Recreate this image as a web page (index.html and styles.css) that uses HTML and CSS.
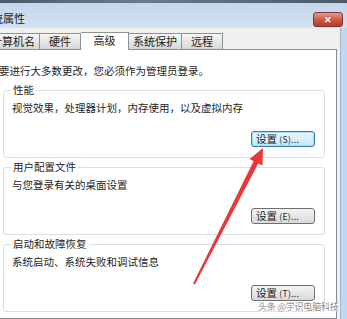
FILE: index.html
```html
<!DOCTYPE html>
<html lang="zh-CN">
<head>
<meta charset="utf-8">
<title>系统属性</title>
<link rel="stylesheet" href="styles.css">
</head>
<body>
<div class="window">
  <div class="topstrip"></div>
  <div class="titlebar">
    <span class="title">统属性</span>
    <span class="close">✕</span>
  </div>
  <div class="client">
    <div class="client-main">
      <div class="tabs">
        <div class="tab first">计算机名</div>
        <div class="tab">硬件</div>
        <div class="tab active">高级</div>
        <div class="tab">系统保护</div>
        <div class="tab">远程</div>
      </div>
      <div class="panel">
        <div class="note">要进行大多数更改，您必须作为管理员登录。</div>
        <fieldset class="group">
          <legend>性能</legend>
          <div class="desc">视觉效果，处理器计划，内存使用，以及虚拟内存</div>
          <div class="actions"><button class="btn focused">设置 <span class="key">(S)...</span></button></div>
        </fieldset>
        <fieldset class="group">
          <legend>用户配置文件</legend>
          <div class="desc">与您登录有关的桌面设置</div>
          <div class="actions"><button class="btn">设置 <span class="key">(E)...</span></button></div>
        </fieldset>
        <fieldset class="group">
          <legend>启动和故障恢复</legend>
          <div class="desc">系统启动、系统失败和调试信息</div>
          <div class="actions"><button class="btn">设置 <span class="key">(T)...</span></button></div>
        </fieldset>
      </div>
    </div>
    <div class="frame-right"></div>
  </div>
</div>
<svg class="arrow" width="347" height="319" viewBox="0 0 347 319">
  <polygon points="263,148 262.5,165.5 258.2,163.4 194.9,284.5 193.1,283.5 253.6,161.2 249.6,159.1" fill="#e8383a"/>
</svg>
<div class="watermark">头条 @学识电脑科技</div>
</body>
</html>
```

FILE: styles.css
```css
html, body {
  margin: 0;
  padding: 0;
}
body {
  width: 347px;
  height: 319px;
  overflow: hidden;
  position: relative;
  background: #f0f0f0;
  font-family: "Noto Sans CJK SC", "Noto Sans", sans-serif;
  font-size: 10.5px;
  color: #1e1e1e;
}
.window {
  display: flex;
  flex-direction: column;
  height: 319px;
}
.topstrip {
  height: 3px;
  background: linear-gradient(90deg, #4b5866, #6b7a8a 40%, #4b5866);
}
.titlebar {
  height: 25px;
  background: linear-gradient(#c2d6ec, #d4e2f1);
  display: flex;
  align-items: center;
  justify-content: space-between;
  padding: 0 4px 0 0;
  box-sizing: border-box;
}
.title {
  margin-left: -8px;
  font-size: 11px;
  color: #1a1a1a;
  padding-top: 4px;
}
.close {
  width: 30px;
  height: 15px;
  margin-top: 7px;
  box-sizing: border-box;
  border: 1px solid #7c3a33;
  border-radius: 3px;
  background: linear-gradient(#e49a8c, #cf5b48 50%, #b73a28);
  color: #fff;
  font-size: 9px;
  font-weight: bold;
  line-height: 13px;
  text-align: center;
}
.client {
  flex: 1;
  display: flex;
}
.client-main {
  flex: 1;
  background: #f0f0f0;
  display: flex;
  flex-direction: column;
  padding-top: 3px;
  padding-right: 3px;
}
.frame-right {
  width: 6px;
  background: #c3d6eb;
  border-left: 1px solid #9fb6cf;
}
.tabs {
  display: flex;
  align-items: flex-end;
  height: 18px;
  position: relative;
  z-index: 1;
}
.tab {
  min-width: 41px;
  height: 16px;
  box-sizing: border-box;
  padding: 0 4px;
  border: 1px solid #8e9196;
  border-bottom: none;
  border-left: none;
  background: linear-gradient(#f7f7f7, #e6e6e6 50%, #d7d7d7);
  font-size: 11px;
  line-height: 15px;
  text-align: center;
  color: #222;
}
.tab.first {
  margin-left: -13px;
}
.tab.active {
  min-width: 48px;
  height: 18px;
  margin-bottom: -1px;
  background: #fff;
  line-height: 15px;
  padding-bottom: 2px;
}
.panel {
  flex: 1;
  background: #fff;
  border: 1px solid #898c95;
  border-left: none;
  padding: 14px 0 0 0;
}
.note {
  line-height: 14px;
  margin-left: -1px;
}
.group {
  margin: 5px 0 2px 3px;
  width: 322px;
  box-sizing: border-box;
  border: 1px solid #d5dfe5;
  border-radius: 3px;
  padding: 0 9px 10px 8px;
}
.group + .group {
  margin-top: 2px;
}
.group legend {
  padding: 0 2px;
  line-height: 14px;
  margin-left: -1px;
}
.desc {
  margin-top: 4px;
  line-height: 14px;
}
.actions {
  display: flex;
  justify-content: flex-end;
  margin-top: 16px;
}
.btn {
  width: 64px;
  height: 16px;
  box-sizing: border-box;
  border: 1px solid #707070;
  border-radius: 3px;
  background: linear-gradient(#f3f3f3, #e6e6e6 50%, #d9d9d9);
  font-family: inherit;
  font-size: 10.5px;
  line-height: 13px;
  padding: 0 0 0 4px;
  text-align: left;
  color: #222;
  white-space: nowrap;
}
.btn .key {
  font-size: 8.5px;
  letter-spacing: 0.3px;
}
.btn.focused {
  border-color: #3c7fb1;
  background: linear-gradient(#eaf6fd, #d9f0fc 50%, #bee6fd);
  box-shadow: inset 0 0 0 1px #a7d9f5;
}
.arrow {
  position: absolute;
  left: 0;
  top: 0;
  pointer-events: none;
}
.watermark {
  position: absolute;
  left: 258px;
  top: 301px;
  font-size: 9px;
  line-height: 12px;
  letter-spacing: -0.2px;
  color: #8a8a8a;
  text-shadow: 0 0 1px #fff, 1px 1px 0 #fff;
  white-space: nowrap;
}
```
